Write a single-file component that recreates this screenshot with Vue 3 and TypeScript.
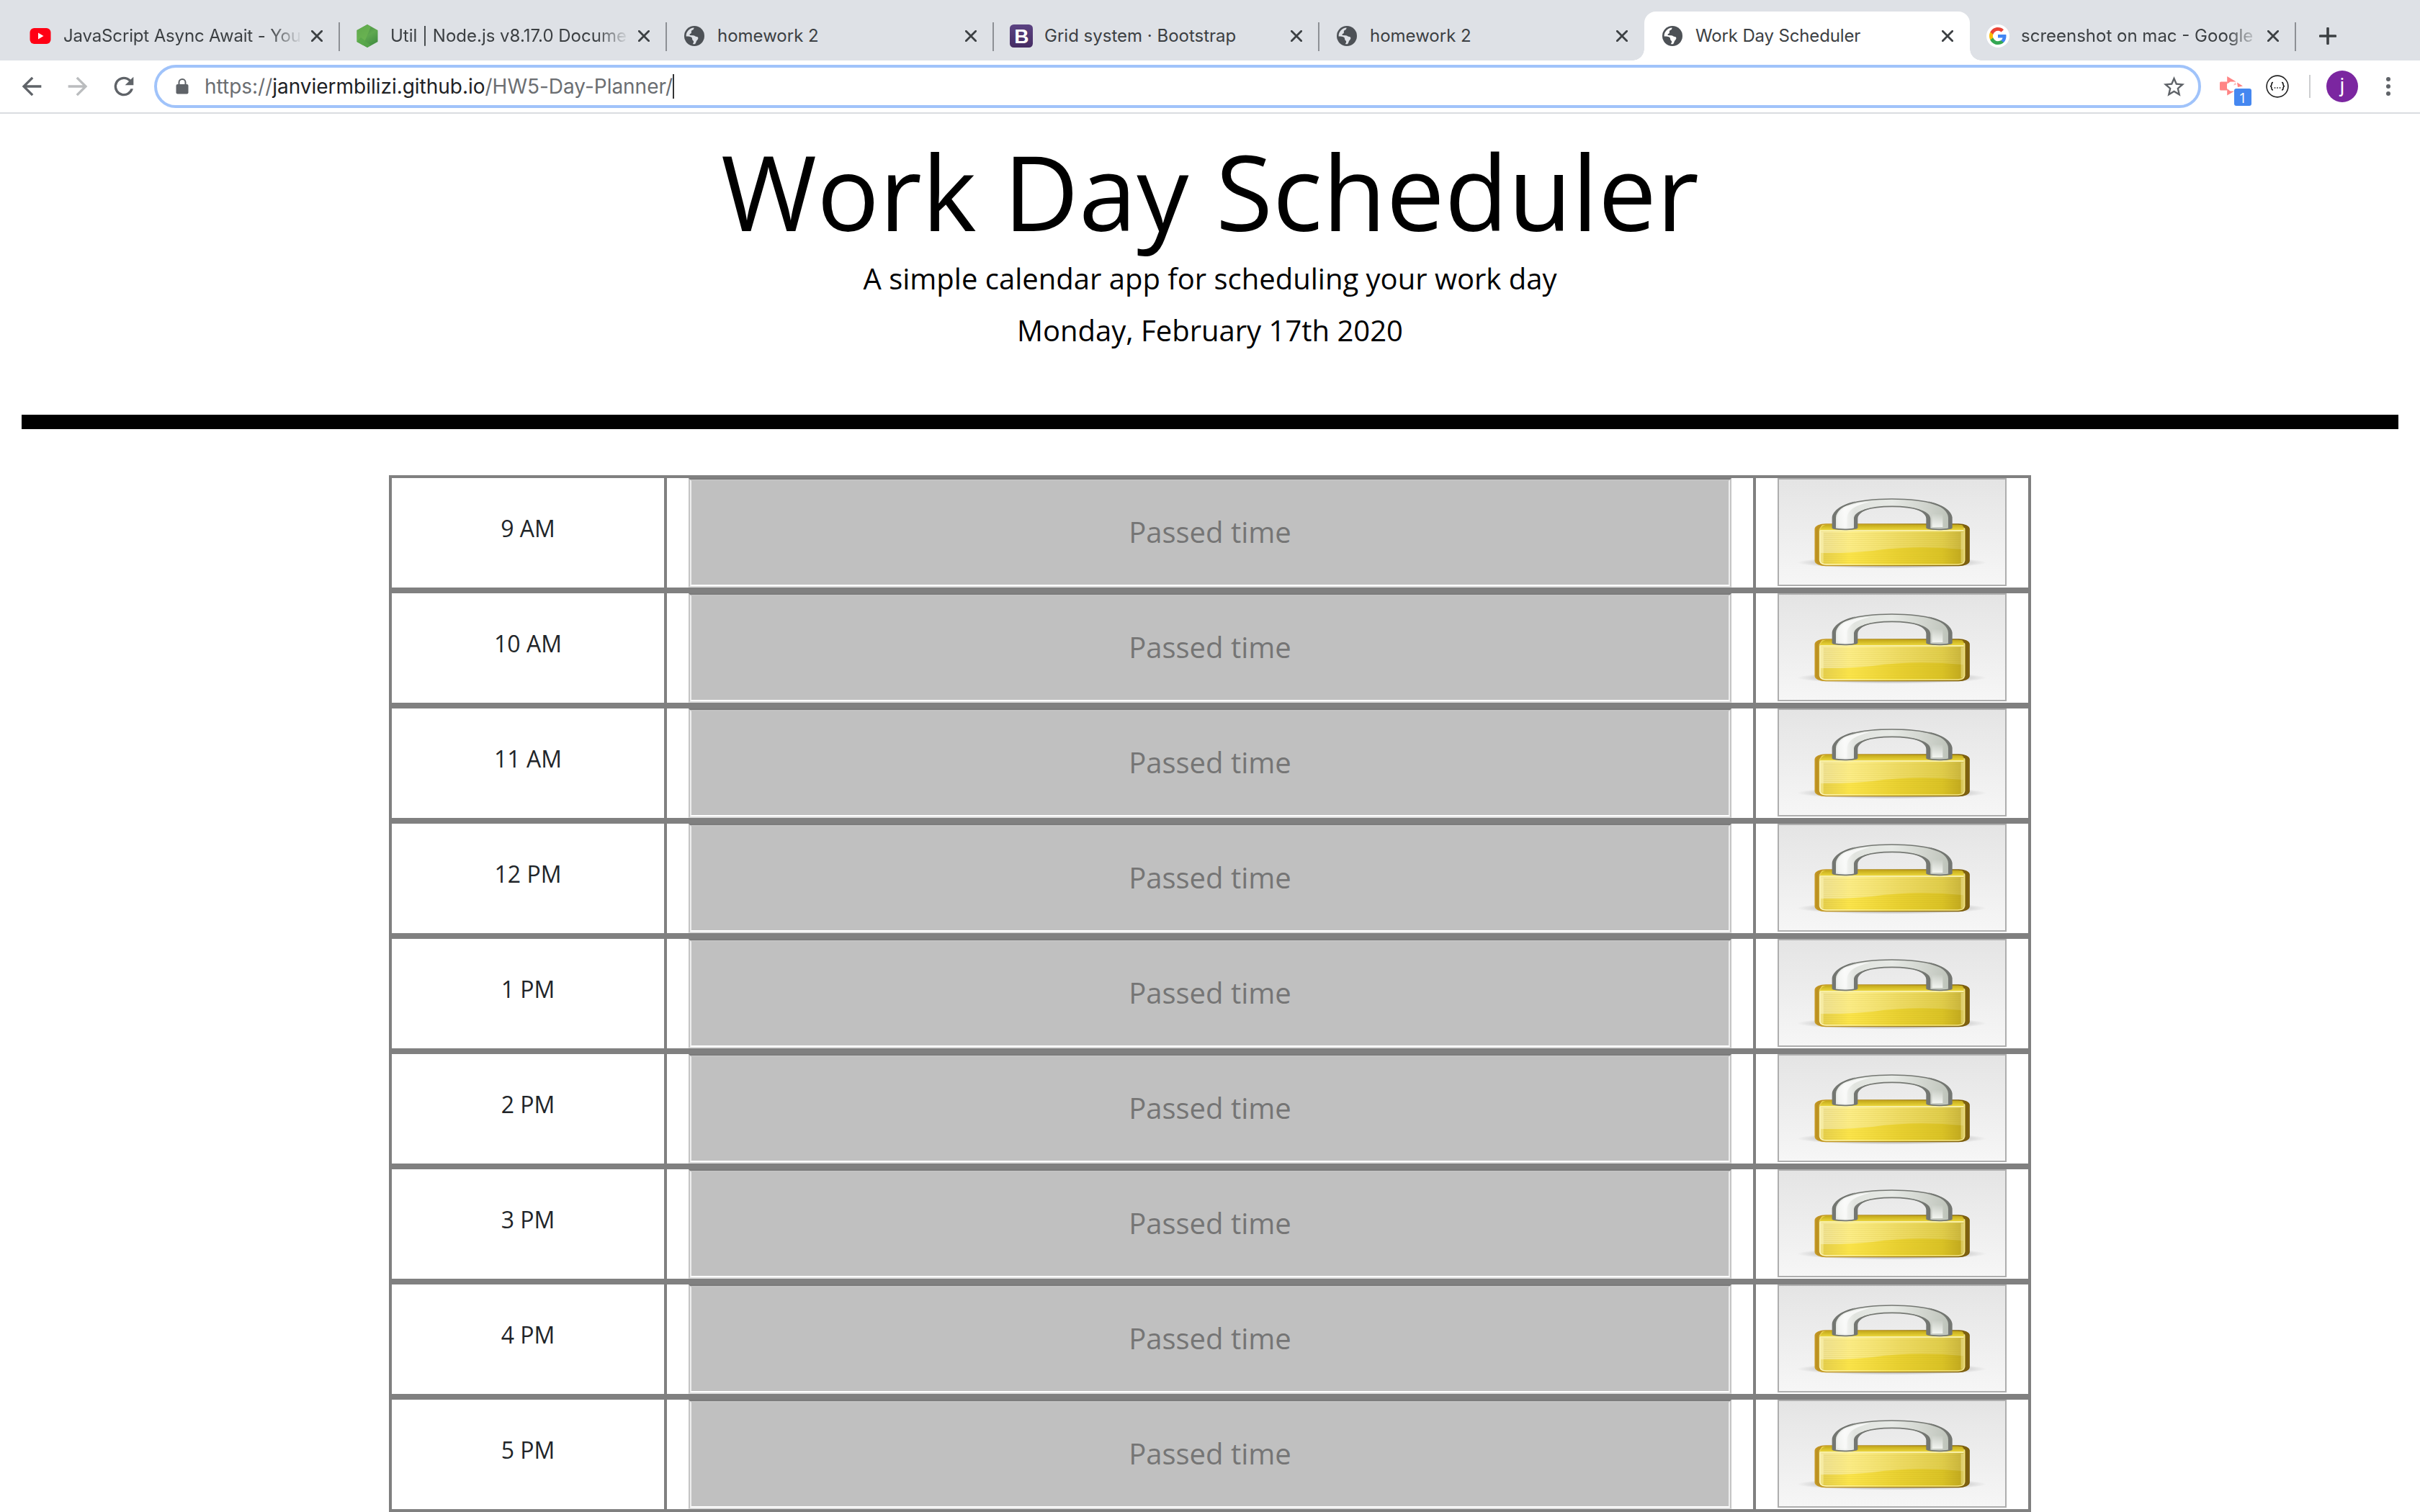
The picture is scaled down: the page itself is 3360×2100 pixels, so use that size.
<script setup lang="ts">
type TabIcon = 'youtube' | 'node' | 'globe' | 'bootstrap' | 'google'

interface Tab {
  title: string
  icon: TabIcon
  cls: string
}

const tabs: Tab[] = [
  { title: 'JavaScript Async Await - You', icon: 'youtube', cls: 'wide clipped tight' },
  { title: 'Util | Node.js v8.17.0 Docume', icon: 'node', cls: 'wide clipped' },
  { title: 'homework 2', icon: 'globe', cls: 'wide' },
  { title: 'Grid system · Bootstrap', icon: 'bootstrap', cls: '' },
  { title: 'homework 2', icon: 'globe', cls: 'bare' },
  { title: 'Work Day Scheduler', icon: 'globe', cls: 'bare active tight' },
  { title: 'screenshot on mac - Google', icon: 'google', cls: 'clipped' },
]

const hours: string[] = ['9 AM', '10 AM', '11 AM', '12 PM', '1 PM', '2 PM', '3 PM', '4 PM', '5 PM']
const stripes: number[] = Array.from({ length: 16 }, (_, i) => 244 + i * 8)
</script>

<template>
  <div class="window">
    <div class="tabstrip">
      <div v-for="(tab, i) in tabs" :key="i" class="tab" :class="tab.cls">
        <svg v-if="tab.icon === 'youtube'" class="favicon" viewBox="0 0 32 32">
          <rect x="1.5" y="5" width="29" height="22" rx="6" fill="#ff0014" />
          <path d="M13 11.5v9l7.500-4.500z" fill="#fff" />
        </svg>
        <svg v-else-if="tab.icon === 'node'" class="favicon" viewBox="0 0 32 32">
          <defs>
            <linearGradient id="nodeFill" x1="0.2" y1="0" x2="0.8" y2="1">
              <stop offset="0" stop-color="#3f873f" />
              <stop offset="0.5" stop-color="#5fa850" />
              <stop offset="1" stop-color="#3e8a3f" />
            </linearGradient>
          </defs>
          <path d="M16 0l14.500 8v16L16 32 1.500 24V8z" fill="url(#nodeFill)" />
          <path d="M16 0l5 3L10 29 1.500 24V8z" fill="#6cb552" opacity="0.75" />
          <path d="M1.500 24L7 18l14 11-5 3z" fill="#57a64b" opacity="0.8" />
        </svg>
        <svg v-else-if="tab.icon === 'globe'" class="favicon" viewBox="0 0 32 32">
          <circle cx="16" cy="16" r="14" fill="#4d5156" />
          <path class="land" d="M4.600 16.500C4.400 10 9.400 5 15.600 4.600c-.2 1.600-.6 2.700-2.200 3.200-1.500.5-1.700 1.700-1.500 3.200.1 1-.7 1.800-1.800 2-1 .3-.8 2 .4 2.100l4.200.2c2 .2 2.800 1.700 4.600 1.800 1.600.1 2.300 1 2 2.500-.3 1.800-1.700 2.100-2.400 3.600-.6 1.300-.7 2.900-2 4-1.200.1-2 .1-3-.1.300-1.300 1.500-2 1.200-3.600-.3-1.400-2.100-1.600-2-3.300 0-1.800-1-3-2.800-3.300-1.900-.3-3.800-.4-5.700-.4z" />
        </svg>
        <svg v-else-if="tab.icon === 'bootstrap'" class="favicon" viewBox="0 0 32 32">
          <defs>
            <linearGradient id="bsFill" x1="0" y1="0" x2="0" y2="1">
              <stop offset="0" stop-color="#5b4282" />
              <stop offset="1" stop-color="#452c63" />
            </linearGradient>
          </defs>
          <rect width="32" height="32" rx="5.500" fill="url(#bsFill)" />
          <text x="16.300" y="26" text-anchor="middle" class="bs-letter">B</text>
        </svg>
        <svg v-else class="favicon" viewBox="0 0 32 32">
          <circle cx="16" cy="16" r="16" fill="#fff" />
          <g transform="translate(4 4)">
            <path fill="#4285f4" d="M23.500 12.300c0-.8-.1-1.600-.2-2.300H12v4.500h6.500c-.3 1.500-1.100 2.800-2.400 3.600v3h3.900c2.200-2.100 3.500-5.200 3.500-8.800z" />
            <path fill="#34a853" d="M12 24c3.200 0 6-1.100 8-2.900l-3.900-3c-1.100.7-2.500 1.200-4.100 1.200-3.100 0-5.800-2.100-6.700-5H1.300v3.100C3.300 21.400 7.300 24 12 24z" />
            <path fill="#fbbc05" d="M5.300 14.300c-.3-.7-.4-1.500-.4-2.300s.1-1.600.4-2.300V6.600h-4C.5 8.200 0 10.100 0 12s.5 3.800 1.300 5.400z" />
            <path fill="#ea4335" d="M12 4.800c1.800 0 3.300.6 4.600 1.800l3.400-3.400C18 1.200 15.200 0 12 0 7.300 0 3.300 2.700 1.300 6.600l4 3.100c.9-2.800 3.600-4.900 6.700-4.900z" />
          </g>
        </svg>
        <span class="tab-title">{{ tab.title }}</span>
        <svg class="close" viewBox="0 0 16 16"><path d="M1.300 1.300l13.400 13.400M14.700 1.300L1.300 14.700" /></svg>
      </div>
      <svg class="new-tab" viewBox="0 0 24 24"><path d="M12 1.500v21M1.500 12h21" /></svg>
    </div>

    <div class="toolbar">
      <svg class="nav back" viewBox="0 0 24 24"><path d="M20 11H7.830l5.590-5.590L12 4l-8 8 8 8 1.410-1.410L7.830 13H20z" /></svg>
      <svg class="nav forward" viewBox="0 0 24 24"><path d="M4 13h12.170l-5.590 5.590L12 20l8-8-8-8-1.410 1.410L16.170 11H4z" /></svg>
      <svg class="nav reload" viewBox="0 0 24 24"><path d="M17.650 6.350A7.960 7.960 0 0 0 12 4a8 8 0 1 0 7.730 10h-2.080A6 6 0 1 1 12 6c1.660 0 3.140.69 4.220 1.780L13 11h7V4z" /></svg>
      <div class="omnibox">
        <svg class="padlock" viewBox="0 0 18 22">
          <rect x="0.500" y="8" width="17" height="13.500" rx="2" fill="#5f6368" />
          <path d="M4.500 9V5.500a4.500 4.500 0 0 1 9 0V9" fill="none" stroke="#5f6368" stroke-width="2" />
        </svg>
        <span class="url">https://<b>janviermbilizi.github.io</b>/HW5-Day-Planner/</span>
        <i class="caret"></i>
        <svg class="star" viewBox="0 0 24 24"><path d="M22 9.240l-7.190-.62L12 2 9.190 8.630 2 9.240l5.460 4.730L5.820 21 12 17.270 18.180 21l-1.630-7.030zM12 15.400l-3.760 2.270 1-4.280-3.320-2.880 4.380-.38L12 6.100l1.710 4.040 4.380.38-3.320 2.880 1 4.280z" /></svg>
      </div>
      <div class="ext">
        <svg class="ext-icon" viewBox="0 0 32 28">
          <rect x="10" y="8" width="15" height="11" fill="#fff" />
          <path d="M1.500 7.500H10v12H1.500Q0 19.500 0 18V9Q0 7.500 1.500 7.500zM10.200 0l12.500 7.500h-8l-4.500 3zM10.200 26.500V17l4.300 3.500 5.500.3zM24 8.500l8 5-7 1.500z" fill="#ff8484" />
          <path d="M19 12.500l2.500-4 1.500 3" fill="#ff8484" opacity="0.6" />
        </svg>
        <span class="badge">1</span>
      </div>
      <svg class="braces" viewBox="0 0 32 32">
        <circle cx="16" cy="16" r="14.900" fill="#fff" stroke="#222" stroke-width="1.600" />
        <path d="M10 10.500c-2 0-2 1-2 2.300 0 1.800 0 2.600-1.800 2.900C8 16 8 16.900 8 18.700 8 20 8 21 10 21M22 10.500c2 0 2 1 2 2.300 0 1.800 0 2.600 1.800 2.900C24 16 24 16.900 24 18.700 24 20 24 21 22 21" fill="none" stroke="#111" stroke-width="1.500" />
        <path d="M11.800 17.200h1.500v1.500h-1.500zM15.300 17.200h1.500v1.500h-1.500zM18.800 17.200h1.500v1.500h-1.500z" fill="#111" />
      </svg>
      <i class="divider"></i>
      <div class="avatar">j</div>
      <svg class="dots" viewBox="0 0 6 26"><circle cx="3" cy="3" r="3" /><circle cx="3" cy="13" r="3" /><circle cx="3" cy="23" r="3" /></svg>
    </div>

    <header class="hero">
      <h1>Work Day Scheduler</h1>
      <p class="lead">A simple calendar app for scheduling your work day</p>
      <p class="date">Monday, February 17th 2020</p>
    </header>

    <svg class="defs" width="0" height="0" aria-hidden="true">
      <defs>
        <linearGradient id="bodyEdge" x1="0" y1="0" x2="1" y2="0">
          <stop offset="0" stop-color="#c79a24" />
          <stop offset="0.500" stop-color="#a88418" />
          <stop offset="1" stop-color="#775808" />
        </linearGradient>
        <linearGradient id="bodyFill" x1="0" y1="0" x2="1" y2="0">
          <stop offset="0" stop-color="#e5cf50" />
          <stop offset="0.200" stop-color="#fde74d" />
          <stop offset="0.550" stop-color="#ead232" />
          <stop offset="0.850" stop-color="#dbc427" />
          <stop offset="1" stop-color="#c0a81f" />
        </linearGradient>
        <linearGradient id="bodyTop" x1="0" y1="0" x2="0" y2="1">
          <stop offset="0" stop-color="#c3a81a" />
          <stop offset="1" stop-color="#ead53a" />
        </linearGradient>
        <linearGradient id="gloss" x1="0" y1="0" x2="1" y2="0">
          <stop offset="0" stop-color="#fff" stop-opacity="0.400" />
          <stop offset="1" stop-color="#fff" stop-opacity="0.140" />
        </linearGradient>
        <linearGradient id="rim" x1="0" y1="0" x2="1" y2="0">
          <stop offset="0" stop-color="#fbf5bf" />
          <stop offset="0.500" stop-color="#f7e96c" />
          <stop offset="1" stop-color="#efe08a" />
        </linearGradient>
        <linearGradient id="steel" x1="0" y1="0" x2="1" y2="0">
          <stop offset="0" stop-color="#dfe2dd" />
          <stop offset="0.100" stop-color="#f4f5f3" />
          <stop offset="0.180" stop-color="#e1e4df" />
          <stop offset="0.500" stop-color="#e6e9e5" />
          <stop offset="0.820" stop-color="#cdd1ca" />
          <stop offset="1" stop-color="#bcc2b8" />
        </linearGradient>
        <linearGradient id="glint" x1="0" y1="1" x2="1" y2="0">
          <stop offset="0" stop-color="#fff" stop-opacity="0.400" />
          <stop offset="1" stop-color="#fff" />
        </linearGradient>
        <linearGradient id="legShade" x1="0" y1="0" x2="0" y2="1">
          <stop offset="0" stop-color="#f2f4f0" stop-opacity="0" />
          <stop offset="1" stop-color="#f2f4f0" />
        </linearGradient>
        <radialGradient id="ground">
          <stop offset="0" stop-color="#000" stop-opacity="0.400" />
          <stop offset="0.750" stop-color="#000" stop-opacity="0.150" />
          <stop offset="1" stop-color="#000" stop-opacity="0" />
        </radialGradient>
        <symbol id="lock" viewBox="30 18 942 438" preserveAspectRatio="none">
          <ellipse cx="500" cy="364" rx="395" ry="25" fill="url(#ground)" />
          <rect x="181" y="204" width="641" height="172" rx="44" ry="20" fill="url(#bodyFill)" stroke="url(#bodyEdge)" stroke-width="5" />
          <path d="M183 222q3-14 28-17l-14 20v130l14 18q-26-2-28-16z" fill="#bd9222" />
          <path d="M820 222q-3-14-28-17l14 20v130l-14 18q26-2 28-16z" fill="#7d6010" />
          <path d="M226 206h550q22 4 27 22H202q4-18 24-22z" fill="url(#bodyTop)" />
          <rect x="203" y="230" width="596" height="142" rx="26" ry="9" fill="url(#bodyFill)" />
          <path d="M203 230h596v80Q600 290 420 315 320 326 203 324z" fill="url(#gloss)" />
          <path v-for="y in stripes" :key="y" :d="`M216 ${y}H786`" stroke="#b99d10" stroke-opacity="0.160" stroke-width="3" />
          <path d="M200 231H800" stroke="#f8efa5" stroke-width="6" />
          <path d="M201 232v126q3 13 27 14h546q26-2 28-14V220" fill="none" stroke="url(#rim)" stroke-width="5" />
          <path d="M209 236v128M794 236v128" stroke="#fff7b8" stroke-width="12" stroke-opacity="0.400" />
          <path d="M256 221V176C262 128 350 99 500 99s240 29 247 77v45q-20 6-50 5-30 0-48-5v-40C648 150 600 130 501 130S352 150 352 181v40q-20 6-48 5-30 0-48-5z" fill="url(#steel)" stroke="#747772" stroke-width="5" />
          <path d="M251 221V176C255 148 290 122 350 109 295 128 267 152 267 178v43zM752 221V176C748 148 712 122 650 109 708 128 735 152 735 178v43zM358 221v-40C358 160 385 143 430 134 375 141 342 158 342 181v40zM643 221v-40C643 160 616 143 571 134 626 141 661 158 661 181v40z" fill="#747772" />
          <path d="M272 212v-36C278 140 330 116 408 110c-50 14-92 30-94 66v40q-24 3-42-4z" fill="url(#glint)" opacity="0.850" />
          <path d="M668 160h44v56h-44z" fill="url(#legShade)" />
        </symbol>
      </defs>
    </svg>

    <main class="planner">
      <div v-for="hour in hours" :key="hour" class="row">
        <div class="hour">{{ hour }}</div>
        <div class="entry"><div class="field"><div class="field-inner">Passed time</div></div></div>
        <div class="save"><div class="lock-btn"><svg class="lock"><use href="#lock" /></svg></div></div>
      </div>
    </main>
  </div>
</template>

<style>
body {
  margin: 0;
  background: #fff;
}
</style>

<style scoped>
.window {
  width: 3360px;
  height: 2100px;
  overflow: hidden;
  background: #fff;
  font-family: "Open Sans", sans-serif;
}
.tabstrip {
  display: flex;
  height: 84px;
  padding-left: 17px;
  box-sizing: border-box;
  background: #dee1e6;
  font: 24px/28px Inter, sans-serif;
  color: #3c4043;
}
.tab {
  position: relative;
  display: flex;
  align-items: center;
  flex: none;
  width: 452px;
  height: 68px;
  margin-top: 16px;
  padding: 0 23px;
  box-sizing: border-box;
}
.wide { width: 454px; }
.tab::after {
  content: "";
  position: absolute;
  right: -1px;
  top: 15px;
  width: 2px;
  height: 40px;
  background: #8d9095;
}
.tab.bare::after { display: none; }
.favicon {
  width: 32px;
  height: 32px;
  flex: none;
}
.tab .land { fill: #dee1e6; }
.active .land { fill: #fff; }
.bs-letter { font: bold 28px "Liberation Sans", sans-serif; fill: #fff; }
.tab-title {
  width: 332px;
  margin-left: 16px;
  white-space: nowrap;
}
.tight .tab-title { letter-spacing: -0.15px; }
.clipped .tab-title {
  -webkit-mask-image: linear-gradient(to right, #000 calc(100% - 46px), transparent);
  mask-image: linear-gradient(to right, #000 calc(100% - 46px), transparent);
}
.close {
  width: 16px;
  height: 16px;
  margin-left: auto;
  flex: none;
}
.close path {
  stroke: #3c4043;
  stroke-width: 2.8;
  stroke-linecap: round;
}
.active {
  background: #fff;
  border-radius: 16px 16px 0 0;
}
.tab.active::before,
.tab.active::after {
  content: "";
  display: block;
  position: absolute;
  top: auto;
  bottom: 0;
  width: 16px;
  height: 16px;
}
.tab.active::before {
  left: -16px;
  background: radial-gradient(circle at 0 0, transparent 15.5px, #fff 16px);
}
.tab.active::after {
  right: -16px;
  background: radial-gradient(circle at 100% 0, transparent 15.5px, #fff 16px);
}
.new-tab {
  width: 24px;
  height: 24px;
  margin: 38px 0 0 33px;
}
.new-tab path {
  stroke: #3c4043;
  stroke-width: 3.6;
  stroke-linecap: round;
}
.toolbar {
  display: flex;
  align-items: center;
  height: 74px;
  padding: 0 0 0 24px;
  box-sizing: border-box;
  border-bottom: 2px solid #dadce0;
  font-family: Inter, sans-serif;
}
.nav {
  width: 40px;
  height: 40px;
  flex: none;
  fill: #5f6368;
}
.forward { margin-left: 24px; fill: #babcbe; }
.reload { margin-left: 24px; }
.omnibox {
  display: flex;
  align-items: center;
  width: 2842px;
  height: 60px;
  margin-left: 22px;
  padding: 0 16px 0 26px;
  box-sizing: border-box;
  flex: none;
  border: 4px solid #a0c3fa;
  border-radius: 30px;
}
.padlock { width: 18px; height: 22px; }
.url {
  margin-left: 22px;
  font-size: 28px;
  letter-spacing: -0.02px;
  white-space: nowrap;
  color: #6b6e72;
}
.url b { font-weight: 400; color: #202124; }
.caret { width: 2px; height: 34px; background: #333; }
.star {
  width: 35px;
  height: 35px;
  margin-left: auto;
  fill: #5f6368;
}
.ext {
  position: relative;
  width: 46px;
  height: 28px;
  margin-left: 26px;
}
.ext-icon { width: 32px; height: 28px; display: block; }
.badge {
  position: absolute;
  left: 20px;
  top: 17px;
  width: 24px;
  height: 24px;
  border-radius: 3px;
  background: #4587f0;
  color: #fff;
  font: 20px/26px "Open Sans", sans-serif;
  text-align: center;
}
.braces { width: 32px; height: 32px; margin-left: 18px; }
.divider { width: 2px; height: 32px; margin-left: 28px; background: #cdced0; }
.avatar {
  width: 44px;
  height: 44px;
  margin-left: 22px;
  border-radius: 50%;
  background: #7b26a0;
  color: #fff;
  font: 27px/42px Roboto, sans-serif;
  text-align: center;
}
.dots { width: 6px; height: 26px; margin-left: 39px; fill: #5f6368; }

.hero {
  height: 438px;
  margin: 0 30px;
  padding-top: 21px;
  box-sizing: border-box;
  border-bottom: 20px solid #000;
  text-align: center;
  color: #000;
}
h1 {
  margin: 0;
  font-size: 144px;
  font-weight: 400;
  line-height: 172px;
  letter-spacing: 0.15px;
}
p {
  margin: 0 0 12px;
  font-size: 40px;
  line-height: 60px;
}
.lead { margin-top: 6px; }
.defs { display: block; }
.planner {
  width: 2280px;
  margin: 64px auto 0;
}
.row {
  display: flex;
  height: 160px;
  box-sizing: border-box;
  border: 4px solid #808080;
}
.hour {
  width: 378px;
  padding-top: 46px;
  line-height: 48px;
  font-size: 32px;
  text-align: center;
  color: #212529;
}
.entry {
  width: 1448px;
  padding: 0 30px;
  border: solid #808080;
  border-width: 0 4px;
}
.field {
  height: 152px;
  box-sizing: border-box;
  border: 2px solid;
  border-color: #7b7b7b #c4c4c4 #dcdcdc #c4c4c4;
}
.field-inner {
  height: 148px;
  box-sizing: border-box;
  border: 2px solid;
  border-color: #c3c3c3 #eee #fff #eee;
  background: #c0c0c0;
  padding-top: 41px;
  line-height: 60px;
  font-size: 40px;
  text-align: center;
  color: #757575;
}
.save {
  width: 378px;
  padding: 0 30px;
  box-sizing: border-box;
}
.lock-btn {
  height: 150px;
  box-sizing: border-box;
  border: 2px solid #aeaeae;
  background: linear-gradient(#e4e4e4, #e8e8e8 20%, #f6f6f6);
}
.lock { display: block; width: 314px; height: 146px; }
</style>
